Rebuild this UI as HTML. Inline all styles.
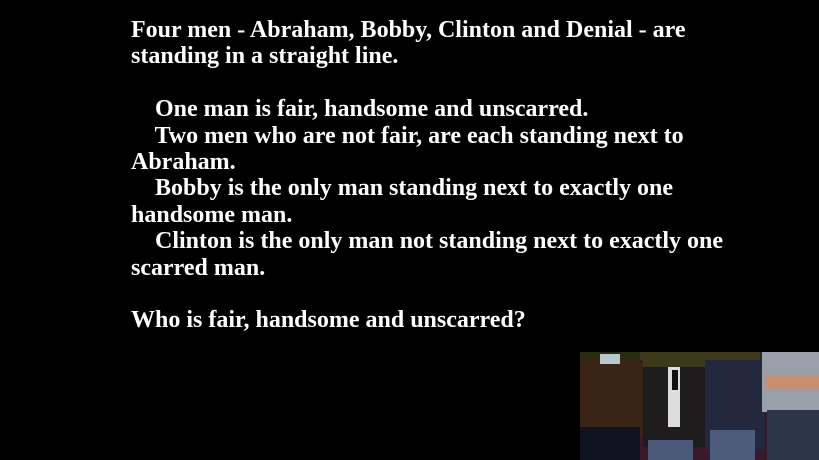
<!DOCTYPE html>
<html><head><style>
html,body{margin:0;padding:0;background:#000;width:819px;height:460px;overflow:hidden;position:relative}
.t{position:absolute;left:131px;top:17px;width:680px;color:#fff;font-family:"Liberation Serif",serif;font-weight:bold;font-size:24px;line-height:26.4px;white-space:pre}
.p{position:absolute;left:580px;top:352px;width:239px;height:108px;background:#2a2a12;overflow:hidden}
.p div{position:absolute}
</style></head><body>
<div class="t">Four men - Abraham, Bobby, Clinton and Denial - are
standing in a straight line.

    One man is fair, handsome and unscarred.
    Two men who are not fair, are each standing next to
Abraham.
    Bobby is the only man standing next to exactly one
handsome man.
    Clinton is the only man not standing next to exactly one
scarred man.

Who is fair, handsome and unscarred?</div>
<div class="p">
<div style="left:60px;top:0;width:120px;height:20px;background:#3a3a1a"></div>
<div style="left:0;top:55px;width:239px;height:53px;background:#3a1a2a"></div>
<div style="left:0;top:8px;width:63px;height:75px;background:#3a2418"></div>
<div style="left:0;top:75px;width:60px;height:33px;background:#101420"></div>
<div style="left:20px;top:2px;width:20px;height:10px;background:#b8c8cc"></div>
<div style="left:63px;top:15px;width:62px;height:80px;background:#1e1c1c"></div>
<div style="left:88px;top:15px;width:12px;height:60px;background:#ddd"></div>
<div style="left:92px;top:18px;width:6px;height:20px;background:#111"></div>
<div style="left:68px;top:88px;width:45px;height:20px;background:#4a5a78"></div>
<div style="left:125px;top:8px;width:60px;height:90px;background:#23283e"></div>
<div style="left:130px;top:78px;width:45px;height:30px;background:#4c5c7a"></div>
<div style="left:182px;top:0;width:57px;height:60px;background:#9aa0aa"></div>
<div style="left:185px;top:23px;width:54px;height:14px;background:#c49070"></div>
<div style="left:187px;top:58px;width:52px;height:50px;background:#2c3648"></div>
</div>
</body></html>
